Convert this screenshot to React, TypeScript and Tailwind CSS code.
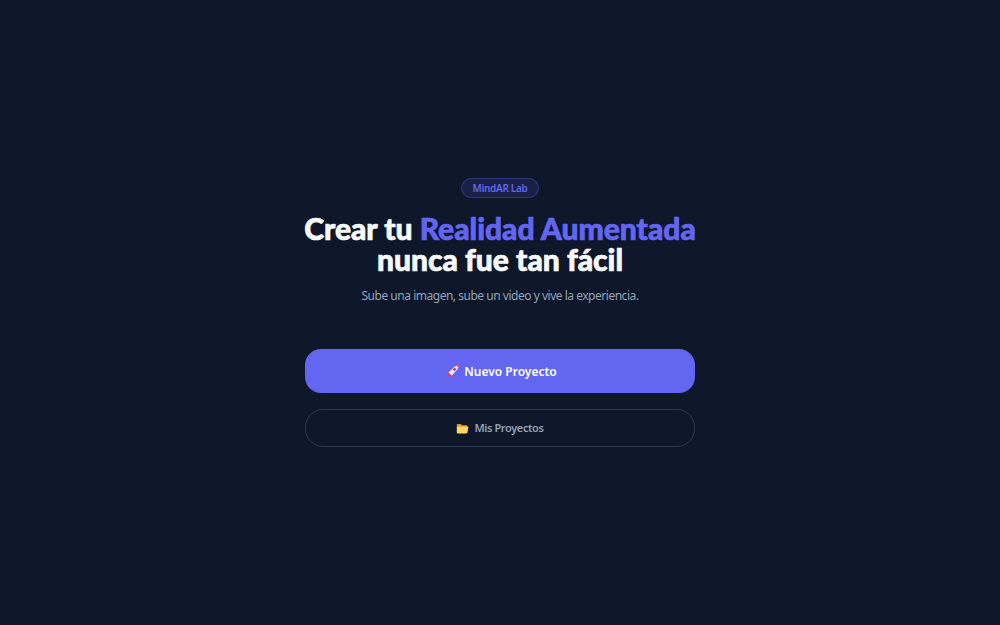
const RocketIcon = () => (
  <svg viewBox="0 0 16 16" className="w-[15px] h-[15px] shrink-0">
    <path d="M3 8.5 L0.8 11 L4 11 Z" fill="#e8486a" />
    <path d="M7.5 13 L5 15.2 L5 12 Z" fill="#e8486a" />
    <path d="M3.6 9 L10.5 2.6 Q12.8 1 15 1 Q15 3.2 13.4 5.5 L7 12.4 Z" fill="#e9e4ee" />
    <path d="M3.6 9 L7 12.4 L5.4 13.6 L2.4 10.6 Z" fill="#e5395c" />
    <path d="M12 1.6 Q13.6 1 15 1 Q15 2.4 14.4 4 Z" fill="#e5395c" />
    <circle cx="10.2" cy="5.8" r="1.5" fill="#d9365a" />
  </svg>
);

const FolderIcon = () => (
  <svg viewBox="0 0 16 16" className="w-[13px] h-[13px] shrink-0">
    <path d="M1 3.5 Q1 2.5 2 2.5 H6 L7.5 4 H13 Q14 4 14 5 V8 H1 Z" fill="#d9962b" />
    <path d="M1 6.5 Q1 5.5 2 5.5 H14 Q15.5 5.5 15.2 7 L14 13 Q13.8 14 12.8 14 H2 Q1 14 1 13 Z" fill="#fdd663" />
  </svg>
);

export default function App() {
  return (
    <div className="min-h-screen bg-[#0f172a] flex flex-col items-center font-['Noto_Sans',sans-serif]">
      <div className="w-[390px] flex flex-col items-center pt-[178px]">
        <span className="h-5 w-[78px] flex items-center justify-center rounded-full border border-[#6366f1]/30 bg-[#6366f1]/15 text-[#6366f1] text-[10px] tracking-[-0.03em] font-semibold">
          MindAR Lab
        </span>
        <h1 className="mt-[15px] font-['Lato',sans-serif] text-[30px] leading-[31px] font-black text-center text-[#f8fafc] whitespace-nowrap [-webkit-text-stroke:0.7px_#f8fafc]">
          Crear tu <span className="inline-block text-[#6366f1] [-webkit-text-stroke:0.7px_#6366f1]">Realidad Aumentada</span>
          <br />
          nunca fue tan fácil
        </h1>
        <p className="mt-[11px] text-xs leading-5 tracking-[-0.04em] text-[#94a3b8]">
          Sube una imagen, sube un video y vive la experiencia.
        </p>
        <button className="mt-[43px] w-full h-11 rounded-2xl bg-[#6366f1] text-white text-[12px] font-semibold flex items-center justify-center gap-1 pl-[2px] pt-px">
          <RocketIcon />
          Nuevo Proyecto
        </button>
        <button className="mt-4 w-full h-[38px] rounded-[18px] border border-[#2f3a4d] text-[#94a3b8] text-[11px] tracking-[-0.035em] font-semibold flex items-center justify-center gap-[5px]">
          <FolderIcon />
          Mis Proyectos
        </button>
      </div>
    </div>
  );
}
